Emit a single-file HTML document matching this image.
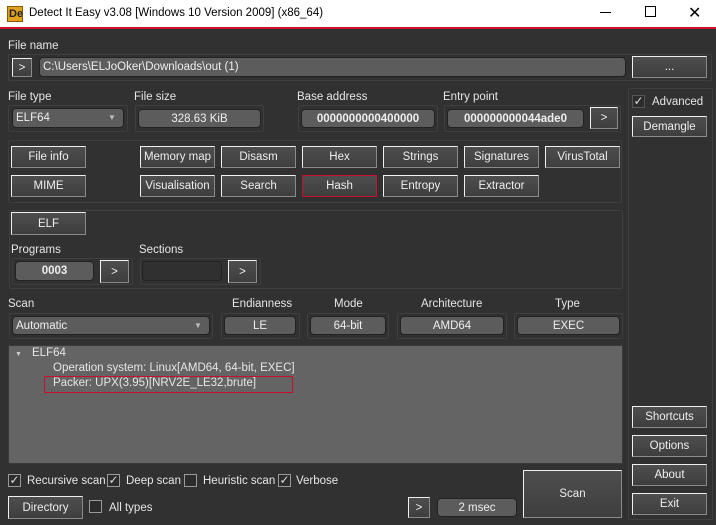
<!DOCTYPE html>
<html><head><meta charset="utf-8"><style>
*{box-sizing:border-box;margin:0;padding:0}
body{width:716px;height:525px;background:#313131;font-family:"Liberation Sans",sans-serif;font-size:11.5px;color:#e8e8e8;position:relative;overflow:hidden}
.a{position:absolute}
.t{position:absolute;white-space:nowrap;color:#e6e6e6}
.b{position:absolute;background:linear-gradient(#4e4e4e,#3e3e3e);border:1px solid;border-color:#f0f0f0 #8a8a8a #8a8a8a #f0f0f0;display:flex;align-items:center;justify-content:center;color:#eee;font-size:11.5px}
.f{position:absolute;background:#5c5c5c;border:1px solid #222;border-radius:4px;display:flex;align-items:center;justify-content:center;color:#eee}
.g{position:absolute;border:1px solid #3f3f3f;border-radius:2px}
.cb{position:absolute;width:13px;height:13px;border:1px solid #9a9a9a;background:#2c2c2c;font-size:12px;line-height:11px;text-align:center;color:#ddd}
</style></head><body>
<div class="a" style="left:0;top:0;width:716px;height:28px;background:#fff"></div>
<div class="a" style="left:0;top:27px;width:716px;height:2px;background:#c8102e"></div>
<div class="a" style="left:7px;top:6px;width:16px;height:16px;background:#e0a020;border:1px solid #8a5a00;font:bold 11px 'Liberation Sans';color:#222;line-height:14px;padding-left:1px">De</div>
<div class="t" style="left:29px;top:7px;color:#000;font-size:11.5px">Detect It Easy v3.08 [Windows 10 Version 2009] (x86_64)</div>
<div class="a" style="left:600px;top:12px;width:11px;height:1px;background:#000"></div>
<div class="a" style="left:645px;top:6px;width:11px;height:11px;border:1px solid #000"></div>
<div class="t" style="left:688px;top:3px;color:#000;font-size:16px">✕</div>

<div class="t" style="left:8px;top:40px">File name</div>
<div class="g" style="left:8px;top:54px;width:704px;height:27px"></div>
<div class="b" style="left:12px;top:58px;width:20px;height:19px">&gt;</div>
<div class="f" style="left:39px;top:57px;width:587px;height:20px;justify-content:flex-start;padding-left:3px">C:\Users\ELJoOker\Downloads\out (1)</div>
<div class="b" style="left:632px;top:56px;width:75px;height:22px">...</div>

<div class="t" style="left:8px;top:91px">File type</div>
<div class="t" style="left:134px;top:91px">File size</div>
<div class="t" style="left:297px;top:91px">Base address</div>
<div class="t" style="left:443px;top:91px">Entry point</div>
<div class="g" style="left:8px;top:105px;width:120px;height:27px"></div>
<div class="g" style="left:135px;top:105px;width:129px;height:27px"></div>
<div class="g" style="left:298px;top:105px;width:140px;height:27px"></div>
<div class="g" style="left:444px;top:105px;width:177px;height:27px"></div>
<div class="f" style="left:12px;top:108px;width:112px;height:20px;justify-content:flex-start;padding-left:3px">ELF64</div>
<div class="t" style="left:108px;top:113px;font-size:8px;color:#bbb">▼</div>
<div class="f" style="left:138px;top:109px;width:123px;height:19px">328.63 KiB</div>
<div class="f" style="left:301px;top:109px;width:134px;height:19px;font-weight:bold">0000000000400000</div>
<div class="f" style="left:447px;top:109px;width:137px;height:19px;font-weight:bold">000000000044ade0</div>
<div class="b" style="left:590px;top:107px;width:28px;height:22px">&gt;</div>

<div class="g" style="left:628px;top:88px;width:85px;height:432px"></div>
<div class="cb" style="left:632px;top:95px;border-color:#555">✓</div>
<div class="t" style="left:652px;top:96px">Advanced</div>
<div class="b" style="left:632px;top:116px;width:75px;height:21px">Demangle</div>

<div class="g" style="left:8px;top:140px;width:614px;height:63px"></div>
<div class="b" style="left:11px;top:146px;width:75px;height:22px">File info</div>
<div class="b" style="left:140px;top:146px;width:75px;height:22px">Memory map</div>
<div class="b" style="left:221px;top:146px;width:75px;height:22px">Disasm</div>
<div class="b" style="left:302px;top:146px;width:75px;height:22px">Hex</div>
<div class="b" style="left:383px;top:146px;width:75px;height:22px">Strings</div>
<div class="b" style="left:464px;top:146px;width:75px;height:22px">Signatures</div>
<div class="b" style="left:545px;top:146px;width:75px;height:22px">VirusTotal</div>
<div class="b" style="left:11px;top:175px;width:75px;height:22px">MIME</div>
<div class="b" style="left:140px;top:175px;width:75px;height:22px">Visualisation</div>
<div class="b" style="left:221px;top:175px;width:75px;height:22px">Search</div>
<div class="b" style="left:302px;top:175px;width:75px;height:22px;border:1px solid #c8102e">Hash</div>
<div class="b" style="left:383px;top:175px;width:75px;height:22px">Entropy</div>
<div class="b" style="left:464px;top:175px;width:75px;height:22px">Extractor</div>

<div class="g" style="left:9px;top:210px;width:614px;height:79px"></div>
<div class="b" style="left:11px;top:212px;width:75px;height:23px">ELF</div>
<div class="t" style="left:11px;top:244px">Programs</div>
<div class="t" style="left:139px;top:244px">Sections</div>
<div class="g" style="left:12px;top:258px;width:121px;height:27px"></div>
<div class="g" style="left:140px;top:258px;width:121px;height:27px"></div>
<div class="f" style="left:15px;top:261px;width:79px;height:20px;font-weight:bold">0003</div>
<div class="b" style="left:100px;top:260px;width:29px;height:23px">&gt;</div>
<div class="f" style="left:142px;top:261px;width:80px;height:20px;background:#303030"></div>
<div class="b" style="left:228px;top:260px;width:29px;height:23px">&gt;</div>

<div class="t" style="left:8px;top:298px">Scan</div>
<div class="t" style="left:232px;top:298px">Endianness</div>
<div class="t" style="left:334px;top:298px">Mode</div>
<div class="t" style="left:421px;top:298px">Architecture</div>
<div class="t" style="left:555px;top:298px">Type</div>
<div class="g" style="left:9px;top:313px;width:204px;height:26px"></div>
<div class="g" style="left:221px;top:313px;width:79px;height:26px"></div>
<div class="g" style="left:307px;top:313px;width:82px;height:26px"></div>
<div class="g" style="left:397px;top:313px;width:110px;height:26px"></div>
<div class="g" style="left:514px;top:313px;width:109px;height:26px"></div>
<div class="f" style="left:12px;top:316px;width:198px;height:19px;justify-content:flex-start;padding-left:3px">Automatic</div>
<div class="t" style="left:194px;top:321px;font-size:8px;color:#bbb">▼</div>
<div class="f" style="left:224px;top:316px;width:72px;height:19px">LE</div>
<div class="f" style="left:310px;top:316px;width:76px;height:19px">64-bit</div>
<div class="f" style="left:400px;top:316px;width:104px;height:19px">AMD64</div>
<div class="f" style="left:517px;top:316px;width:103px;height:19px">EXEC</div>

<div class="a" style="left:8px;top:345px;width:615px;height:119px;background:#646464;border:1px solid #3a3a3a"></div>
<div class="t" style="left:15px;top:351px;font-size:7px;color:#ccc">▼</div>
<div class="t" style="left:32px;top:347px">ELF64</div>
<div class="t" style="left:53px;top:362px">Operation system: Linux[AMD64, 64-bit, EXEC]</div>
<div class="a" style="left:44px;top:376px;width:249px;height:17px;border:1px solid #c8102e"></div>
<div class="t" style="left:53px;top:377px">Packer: UPX(3.95)[NRV2E_LE32,brute]</div>

<div class="cb" style="left:8px;top:474px">✓</div>
<div class="t" style="left:27px;top:475px">Recursive scan</div>
<div class="cb" style="left:107px;top:474px">✓</div>
<div class="t" style="left:126px;top:475px">Deep scan</div>
<div class="cb" style="left:184px;top:474px"></div>
<div class="t" style="left:203px;top:475px">Heuristic scan</div>
<div class="cb" style="left:278px;top:474px">✓</div>
<div class="t" style="left:296px;top:475px">Verbose</div>
<div class="b" style="left:8px;top:496px;width:75px;height:23px">Directory</div>
<div class="cb" style="left:89px;top:500px"></div>
<div class="t" style="left:109px;top:502px">All types</div>
<div class="b" style="left:408px;top:497px;width:22px;height:21px">&gt;</div>
<div class="f" style="left:437px;top:498px;width:80px;height:19px">2 msec</div>
<div class="b" style="left:523px;top:470px;width:99px;height:48px">Scan</div>

<div class="b" style="left:632px;top:406px;width:75px;height:22px">Shortcuts</div>
<div class="b" style="left:632px;top:435px;width:75px;height:22px">Options</div>
<div class="b" style="left:632px;top:464px;width:75px;height:22px">About</div>
<div class="b" style="left:632px;top:493px;width:75px;height:22px">Exit</div>
</body></html>
